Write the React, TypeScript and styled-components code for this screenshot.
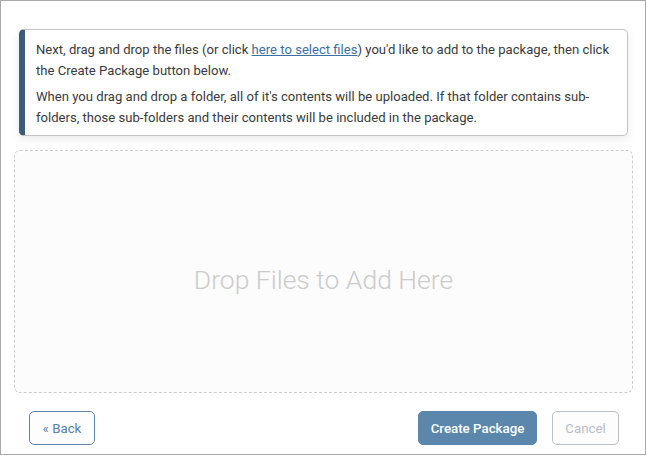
import React from "react";
import styled, { createGlobalStyle } from "styled-components";

const Global = createGlobalStyle`
  html, body { margin: 0; padding: 0; background: #fff; }
  body { font-family: Roboto, "Liberation Sans", Arial, sans-serif; }
  * { box-sizing: border-box; }
`;

const Frame = styled.div`
  width: 646px;
  height: 455px;
  border: 1px solid #a9a9a9;
  padding: 28px 12px 0 13px;
  display: flex;
  flex-direction: column;
  background: #fff;
`;

const InfoCard = styled.div`
  margin: 0 5px;
  border: 1px solid #c4c4c4;
  border-left: 6px solid #3e5b7a;
  border-radius: 5px;
  background: #fff;
  box-shadow: 0 3px 10px rgba(0, 0, 0, 0.09);
  padding: 10px 6px 7px 11px;
  color: #3a3a3a;
  font-size: 13.1px;
  line-height: 20.5px;
`;

const Para = styled.p`
  margin: 0;
  & + & {
    margin-top: 6px;
  }
`;

const Link = styled.a`
  color: #3b6fa3;
  text-decoration: underline;
  cursor: pointer;
`;

const DropZone = styled.div`
  margin-top: 14px;
  height: 243px;
  padding-top: 16px;
  border: 1px dashed #cdcdcd;
  border-radius: 6px;
  background: #fcfcfc;
  display: flex;
  align-items: center;
  justify-content: center;
  color: #cbcbcb;
  font-size: 26.5px;
  font-weight: 300;
`;

const Footer = styled.div`
  margin-top: 18px;
  padding: 0 14px 0 15px;
  display: flex;
  align-items: center;
  gap: 15px;
`;

const Spacer = styled.div`
  flex: 1;
`;

const Button = styled.button<{ $variant: "outline" | "primary" | "disabled" }>`
  height: 34px;
  padding: 0 10px;
  border-radius: 5px;
  font-family: Roboto, "Liberation Sans", Arial, sans-serif;
  font-size: 13.3px;
  cursor: pointer;
  border: 1px solid
    ${(p) =>
      p.$variant === "outline" ? "#5b83ad" : p.$variant === "primary" ? "#5b87ad" : "#b9bfc7"};
  background: ${(p) => (p.$variant === "primary" ? "#5b87ad" : "#fdfdfd")};
  color: ${(p) =>
    p.$variant === "outline" ? "#5a80aa" : p.$variant === "primary" ? "#ffffff" : "#b8bec6"};
  font-weight: ${(p) => (p.$variant === "primary" ? 500 : 400)};
`;

export default function App() {
  return (
    <>
      <Global />
      <Frame>
        <InfoCard>
          <Para>
            Next, drag and drop the files (or click <Link>here to select files</Link>) you'd like
            to add to the package, then click the Create Package button below.
          </Para>
          <Para>
            When you drag and drop a folder, all of it's contents will be uploaded. If that folder
            contains sub-folders, those sub-folders and their contents will be included in the
            package.
          </Para>
        </InfoCard>
        <DropZone>Drop Files to Add Here</DropZone>
        <Footer>
          <Button $variant="outline" style={{ width: 66 }}>« Back</Button>
          <Spacer />
          <Button $variant="primary" style={{ width: 119 }}>Create Package</Button>
          <Button $variant="disabled" style={{ width: 67 }}>Cancel</Button>
        </Footer>
      </Frame>
    </>
  );
}
